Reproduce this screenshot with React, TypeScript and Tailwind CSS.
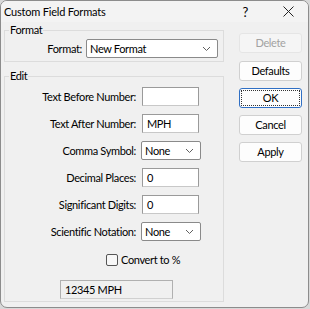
import type { ReactNode } from 'react'

const font = { fontFamily: 'Lato, "Noto Sans", "Liberation Sans", sans-serif' }

function Chevron() {
  return (
    <svg width="9" height="6" viewBox="0 0 9 6" className="text-[#606060]">
      <path d="M1 1 L4.5 4.5 L8 1" fill="none" stroke="currentColor" strokeWidth="1" />
    </svg>
  )
}

function Combo({ value, className }: { value: string; className: string }) {
  return (
    <div
      className={`flex h-[19px] items-center justify-between rounded-[2px] border border-[#8a8a8a] bg-white pl-[3px] pr-[6px] ${className}`}
    >
      <span>{value}</span>
      <Chevron />
    </div>
  )
}

function TextBox({ value }: { value: string }) {
  return (
    <div className="flex h-[19px] w-[57px] items-center border border-[#9a9a9a] border-b-[#c8c8c8] bg-white px-[4px]">
      {value}
    </div>
  )
}

function Row({ label, children }: { label: string; children: ReactNode }) {
  return (
    <div className="flex items-center">
      <div className="w-[132px] pr-[1px] text-right">{label}</div>
      <div className="ml-[5px]">{children}</div>
    </div>
  )
}

function Btn({ label, state }: { label: string; state?: 'disabled' | 'focus' }) {
  if (state === 'disabled')
    return (
      <div className="flex h-[20px] w-[63px] items-center justify-center rounded-[3px] border border-[#e5e5e5] bg-[#f5f5f5] text-[#a2a2a2]">
        {label}
      </div>
    )
  if (state === 'focus')
    return (
      <div className="flex h-[20px] w-[63px] items-center justify-center rounded-[3px] border border-[#2f6fc4] bg-[#fdfdfd] p-[1px]">
        <div className="flex h-full w-full items-center justify-center border border-dotted border-[#333]">{label}</div>
      </div>
    )
  return (
    <div className="flex h-[20px] w-[63px] items-center justify-center rounded-[3px] border border-[#d0d0d0] bg-[#fdfdfd]">
      {label}
    </div>
  )
}

export default function App() {
  return (
    <div className="h-[309px] w-[310px] bg-[#d8d8d8]" style={font}>
      <div className="flex h-[308px] w-[309px] flex-col overflow-hidden rounded-[7px] border border-[#8c8c8c] bg-[#f0f0f0] text-[11px] leading-[14px] tracking-[-0.35px] text-black">
        <div className="flex h-[21px] items-center bg-[#f3f3f3] pl-[3px]">
          <span className="text-[11px] tracking-[-0.2px]">Custom Field Formats</span>
          <span className="ml-auto mr-[35px] text-[13px]">?</span>
          <svg width="11" height="11" viewBox="0 0 11 11" className="mr-[14px]">
            <path d="M0.5 0.5 L10.5 10.5 M10.5 0.5 L0.5 10.5" stroke="#222" strokeWidth="1" />
          </svg>
        </div>

        <div className="flex pl-[3px]">
          <div className="flex w-[220px] flex-col">
            <fieldset className="mt-[1px] border border-[#dcdcdc] px-0 pb-[3px] pt-[2px]">
              <legend className="ml-[4px] px-[1px]">Format</legend>
              <div className="flex items-center">
                <span className="w-[78px] pr-[1px] text-right">Format:</span>
                <Combo value="New Format" className="ml-[3px] w-[132px]" />
              </div>
            </fieldset>

            <fieldset className="mt-[7px] flex h-[233px] flex-col border border-[#dcdcdc] px-0 pt-[4px]">
              <legend className="ml-[4px] px-[1px]">Edit</legend>
              <div className="flex flex-col gap-[8px]">
                <Row label="Text Before Number:">
                  <TextBox value="" />
                </Row>
                <Row label="Text After Number:">
                  <TextBox value=" MPH" />
                </Row>
                <Row label="Comma Symbol:">
                  <Combo value="None" className="-ml-[1px] w-[60px]" />
                </Row>
                <Row label="Decimal Places:">
                  <TextBox value="0" />
                </Row>
                <Row label="Significant Digits:">
                  <TextBox value="0" />
                </Row>
                <Row label="Scientific Notation:">
                  <Combo value="None" className="-ml-[1px] w-[60px]" />
                </Row>
              </div>
              <div className="mt-[12px] flex items-center pl-[101px]">
                <div className="h-[12px] w-[12px] rounded-[2px] border border-[#555] bg-[#f7f7f7]" />
                <span className="ml-[3px]">Convert to %</span>
              </div>
              <div className="ml-[55px] mt-[13px] flex h-[19px] w-[113px] items-center border border-[#b0b0b0] border-b-[#d0d0d0] bg-[#f0f0f0] px-[4px]">
                12345 MPH
              </div>
            </fieldset>
          </div>

          <div className="ml-[15px] mt-[11px] flex flex-col">
            <Btn label="Delete" state="disabled" />
            <div className="mt-[8px]">
              <Btn label="Defaults" />
            </div>
            <div className="mt-[7px]">
              <Btn label="OK" state="focus" />
            </div>
            <div className="mt-[7px]">
              <Btn label="Cancel" />
            </div>
            <div className="mt-[7px]">
              <Btn label="Apply" />
            </div>
          </div>
        </div>
      </div>
    </div>
  )
}
